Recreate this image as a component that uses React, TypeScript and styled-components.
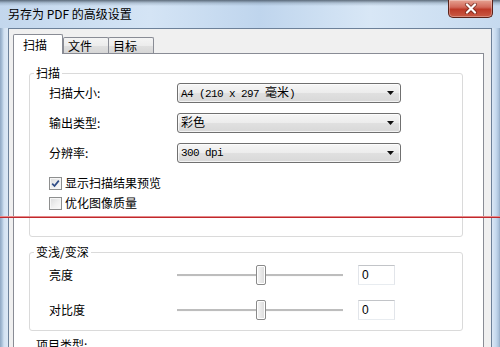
import React from 'react';
import styled, { createGlobalStyle } from 'styled-components';

const GlobalStyle = createGlobalStyle`
  html, body {
    margin: 0;
    padding: 0;
    background: #c9dbee;
  }
  body {
    font-family: "Noto Sans CJK SC", "Liberation Sans", sans-serif;
    font-size: 12px;
    color: #000;
  }
`;

const Window = styled.div`
  position: relative;
  width: 500px;
  height: 347px;
  overflow: hidden;
  display: flex;
  flex-direction: column;
`;

const TitleBar = styled.div`
  flex: none;
  height: 28px;
  display: flex;
  align-items: center;
  justify-content: space-between;
  padding-left: 8px;
  box-sizing: border-box;
  background:
    linear-gradient(180deg, rgba(45, 58, 72, 0.7) 0, rgba(110, 130, 150, 0.35) 3px, rgba(255, 255, 255, 0) 6px),
    linear-gradient(90deg, #c3d7ed 0%, #d4e4f5 30%, #bfd5ed 52%, #d8e7f6 74%, #c6daef 100%);
`;

const TitleText = styled.span`
  line-height: 16px;
  white-space: nowrap;
`;

const CloseButton = styled.div`
  align-self: flex-start;
  width: 45px;
  height: 18px;
  margin-right: 7px;
  box-sizing: border-box;
  border: 1px solid #5a2219;
  border-top: none;
  border-radius: 0 0 5px 5px;
  display: flex;
  align-items: center;
  justify-content: center;
  background: linear-gradient(180deg, #e6a292 0%, #d2695a 42%, #bd3a28 55%, #c95a45 100%);
  box-shadow: inset 0 0 0 1px rgba(255, 255, 255, 0.3);
`;

const FrameBody = styled.div`
  flex: 1;
  min-height: 0;
  display: flex;
`;

const SideFrame = styled.div<{ $side: 'left' | 'right' }>`
  flex: none;
  width: 8px;
  background: ${({ $side }) =>
    $side === 'left'
      ? 'linear-gradient(90deg, #8fa7c2 0, #a9c0d8 2px, #d2e1f1 4px, #dce8f5 8px)'
      : 'linear-gradient(90deg, #dbe7f4 0, #c5d9ee 4px, #a8bfd8 7px, #90a8c3 8px)'};
`;

const Client = styled.div`
  flex: 1;
  min-width: 0;
  display: flex;
  flex-direction: column;
  background: #f0f0f0;
  border: 1px solid #6d8199;
  border-bottom: none;
  padding: 5px 7px 0 4px;
`;

const TabStrip = styled.div`
  flex: none;
  height: 19px;
  display: flex;
  align-items: flex-end;
  position: relative;
  z-index: 1;
`;

const Tab = styled.div<{ $active?: boolean; $width: number; $overlap?: boolean }>`
  box-sizing: border-box;
  width: ${({ $width }) => $width}px;
  height: ${({ $active }) => ($active ? 20 : 16)}px;
  margin-bottom: ${({ $active }) => ($active ? -1 : 0)}px;
  margin-left: ${({ $overlap }) => ($overlap ? -1 : 0)}px;
  padding-left: ${({ $active }) => ($active ? 9 : 4)}px;
  display: flex;
  align-items: center;
  line-height: 16px;
  border: 1px solid #898c95;
  border-bottom: none;
  border-radius: 2px 2px 0 0;
  background: ${({ $active }) =>
    $active ? '#ffffff' : 'linear-gradient(180deg, #f4f4f4 0%, #ececec 50%, #e0e0e0 51%, #d6d6d6 100%)'};
`;

const TabPane = styled.div`
  flex: 1;
  background: #ffffff;
  border: 1px solid #898c95;
  padding: 11px 20px 0 15px;
`;

const GroupBox = styled.fieldset<{ $top?: number; $bottom: number }>`
  margin: ${({ $top }) => $top ?? 0}px 0 0 0;
  padding: 2px 0 ${({ $bottom }) => $bottom}px 4px;
  border: 1px solid #dadada;
  border-radius: 3px;
  min-width: 0;
`;

const Legend = styled.legend`
  padding: 0 2px;
  line-height: 16px;
  font-size: 12px;
`;

const FieldList = styled.div<{ $gap: number; $top?: number }>`
  display: flex;
  flex-direction: column;
  gap: ${({ $gap }) => $gap}px;
  margin-left: 15px;
  padding-top: ${({ $top }) => $top ?? 0}px;
`;

const FieldRow = styled.div<{ $height: number }>`
  display: flex;
  align-items: center;
  height: ${({ $height }) => $height}px;
`;

const FieldLabel = styled.span`
  flex: none;
  width: 128px;
  line-height: 16px;
`;

const SelectBox = styled.div`
  flex: none;
  width: 224px;
  height: 20px;
  box-sizing: border-box;
  display: flex;
  align-items: center;
  justify-content: space-between;
  padding: 0 6px 0 3px;
  border: 1px solid #707070;
  border-radius: 3px;
  background: linear-gradient(180deg, #f6f6f6 0%, #ececec 50%, #e0e0e0 51%, #d8d8d8 100%);
  box-shadow: inset 0 0 0 1px rgba(255, 255, 255, 0.7);
`;

const SelectValue = styled.span`
  font-family: "Liberation Mono", "Noto Sans CJK SC", monospace;
  font-size: 11px;
  letter-spacing: -0.6px;
  line-height: 16px;
  white-space: pre;
`;

const Cjk = styled.span`
  font-family: "Noto Sans CJK SC", sans-serif;
  font-size: 12px;
  letter-spacing: 0;
`;

const CheckList = styled.div`
  display: flex;
  flex-direction: column;
  margin: 10px 0 0 15px;
`;

const CheckRow = styled.label`
  display: flex;
  align-items: center;
  gap: 3px;
  height: 20px;
  line-height: 16px;
`;

const CheckBox = styled.span`
  flex: none;
  width: 13px;
  height: 13px;
  box-sizing: border-box;
  display: flex;
  align-items: center;
  justify-content: center;
  border: 1px solid #8e8f8f;
  background: linear-gradient(135deg, #dadbdc 0%, #f0f0f0 55%, #fbfbfb 100%);
  box-shadow: inset 0 0 0 1px #f6f6f6;
`;

const Slider = styled.div`
  flex: none;
  width: 166px;
  height: 22px;
  display: flex;
  align-items: center;
  background: linear-gradient(
    180deg,
    transparent 10px,
    #bdbdbd 10px,
    #bdbdbd 12px,
    #fafafa 12px,
    #fafafa 13px,
    transparent 13px
  );
`;

const SliderThumb = styled.div`
  flex: none;
  width: 10px;
  height: 20px;
  box-sizing: border-box;
  border: 1px solid #8a8a8a;
  border-radius: 2px;
  background: linear-gradient(90deg, #f6f6f6 0%, #e6e6e6 60%, #dadada 100%);
  box-shadow: inset 0 0 0 1px #ffffff;
`;

const NumberBox = styled.div`
  flex: none;
  margin-left: 15px;
  width: 37px;
  height: 20px;
  box-sizing: border-box;
  padding-left: 3px;
  display: flex;
  align-items: center;
  font-family: "Liberation Sans", sans-serif;
  font-size: 12px;
  background: #ffffff;
  border: 1px solid;
  border-color: #c2c4c8 #e2e5ea #e8ecf0 #e2e5ea;
`;

const SectionLabel = styled.div`
  margin: 6px 0 0 7px;
  line-height: 16px;
`;

// red marker line drawn across the screenshot
const Annotation = styled.div`
  position: absolute;
  left: 0;
  right: 0;
  top: 216px;
  height: 2px;
  background: linear-gradient(180deg, #e58a8a 0 1px, #c0282c 1px 2px);
  z-index: 2;
`;

const DropArrow = () => (
  <svg width="7" height="4" viewBox="0 0 7 4">
    <polygon points="0,0 7,0 3.5,4" fill="#111" />
  </svg>
);

const CloseGlyph = () => (
  <svg width="14" height="11" viewBox="0 0 14 11">
    <path d="M3 1.5 L11 9.5 M11 1.5 L3 9.5" stroke="#5b1c12" strokeWidth="4" strokeLinecap="round" opacity="0.6" />
    <path d="M3 1.5 L11 9.5 M11 1.5 L3 9.5" stroke="#ffffff" strokeWidth="2.2" strokeLinecap="round" />
  </svg>
);

const CheckMark = () => (
  <svg width="9" height="9" viewBox="0 0 9 9">
    <path d="M1.2 4.6 L3.5 7 L7.8 1.6" fill="none" stroke="#2f4c86" strokeWidth="1.7" />
  </svg>
);

const selects: { label: string; value: React.ReactNode }[] = [
  { label: '扫描大小:', value: <>A4 (210 x 297 <Cjk>毫米</Cjk>)</> },
  { label: '输出类型:', value: <Cjk>彩色</Cjk> },
  { label: '分辨率:', value: '300 dpi' },
];

const checks = [
  { label: '显示扫描结果预览', checked: true },
  { label: '优化图像质量', checked: false },
];

const sliders = [
  { label: '亮度', value: 0 },
  { label: '对比度', value: 0 },
];

const SLIDER_MIN = -100;
const SLIDER_MAX = 100;

export default function App() {
  return (
    <>
      <GlobalStyle />
      <Window>
        <TitleBar>
          <TitleText>另存为 PDF 的高级设置</TitleText>
          <CloseButton>
            <CloseGlyph />
          </CloseButton>
        </TitleBar>
        <FrameBody>
          <SideFrame $side="left" />
          <Client>
            <TabStrip>
              <Tab $active $width={50}>扫描</Tab>
              <Tab $width={46}>文件</Tab>
              <Tab $width={46} $overlap>目标</Tab>
            </TabStrip>
            <TabPane>
              <GroupBox $bottom={23}>
                <Legend>扫描</Legend>
                <FieldList $gap={10}>
                  {selects.map((s) => (
                    <FieldRow key={s.label} $height={20}>
                      <FieldLabel>{s.label}</FieldLabel>
                      <SelectBox>
                        <SelectValue>{s.value}</SelectValue>
                        <DropArrow />
                      </SelectBox>
                    </FieldRow>
                  ))}
                </FieldList>
                <CheckList>
                  {checks.map((c) => (
                    <CheckRow key={c.label}>
                      <CheckBox>{c.checked && <CheckMark />}</CheckBox>
                      {c.label}
                    </CheckRow>
                  ))}
                </CheckList>
              </GroupBox>

              <GroupBox $top={7} $bottom={9}>
                <Legend>变浅/变深</Legend>
                <FieldList $gap={13} $top={2}>
                  {sliders.map((s) => {
                    const offset = Math.round(((s.value - SLIDER_MIN) / (SLIDER_MAX - SLIDER_MIN)) * 156) + 1;
                    return (
                      <FieldRow key={s.label} $height={22}>
                        <FieldLabel>{s.label}</FieldLabel>
                        <Slider>
                          <SliderThumb style={{ marginLeft: offset }} />
                        </Slider>
                        <NumberBox>{s.value}</NumberBox>
                      </FieldRow>
                    );
                  })}
                </FieldList>
              </GroupBox>

              <SectionLabel>项目类型:</SectionLabel>
            </TabPane>
          </Client>
          <SideFrame $side="right" />
        </FrameBody>
        <Annotation />
      </Window>
    </>
  );
}
